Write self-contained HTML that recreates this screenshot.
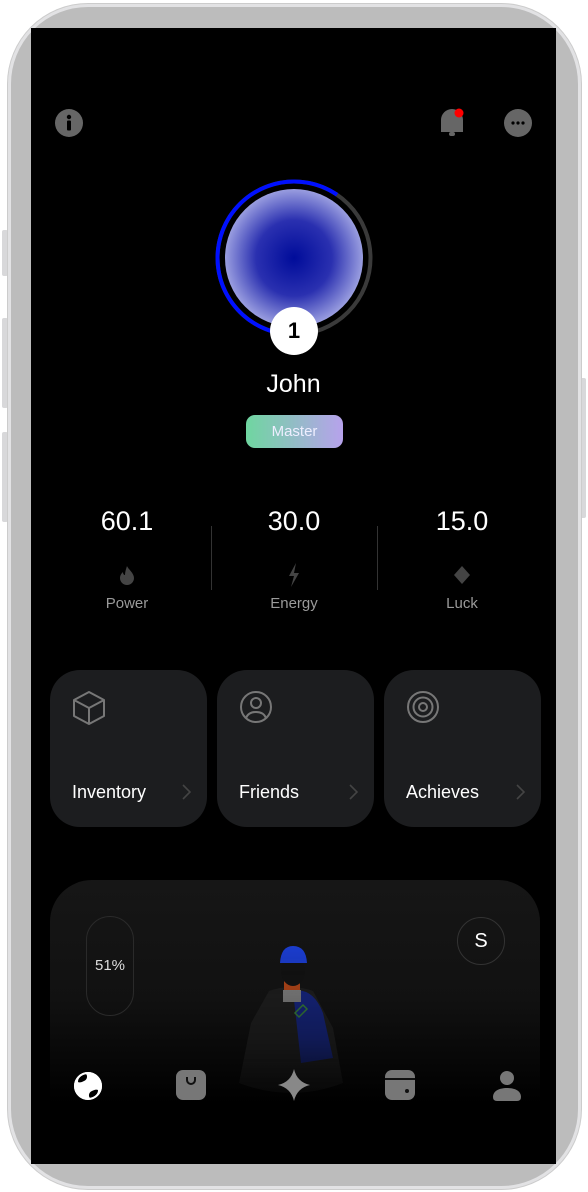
<!DOCTYPE html>
<html><head><meta charset="utf-8"><style>
*{margin:0;padding:0;box-sizing:border-box}
body{width:588px;height:1192px;background:#fff;position:relative;overflow:hidden;font-family:"Liberation Sans",sans-serif;color:#fff}
.body{position:absolute;left:8px;top:4px;width:573px;height:1185px;border-radius:80px;background:#bcbcbc;border:3px solid #e2e2e4;box-shadow:0 0 0 1px #ccc}
.btn{position:absolute;background:#d8d8da;border-radius:2px}
.screen{position:absolute;left:31px;top:28px;width:525px;height:1136px;background:#000;overflow:hidden}
.abs{position:absolute}
.stat{position:absolute;width:150px;text-align:center}
.stat .v{font-size:27px;}
.stat .l{font-size:15px;color:#9a9a9a;position:absolute;top:89px;width:100%}
.card{position:absolute;top:642px;width:157px;height:157px;border-radius:30px;background:#1c1d1f}
.card .t{position:absolute;left:22px;top:112px;font-size:18px}
.card .ch{position:absolute;right:16px;top:113px}
.card .ic{position:absolute;left:22px;top:20px}
</style></head><body>
<div class="btn" style="left:2px;top:230px;width:6px;height:46px"></div>
<div class="btn" style="left:2px;top:318px;width:6px;height:90px"></div>
<div class="btn" style="left:2px;top:432px;width:6px;height:90px"></div>
<div class="btn" style="left:580px;top:378px;width:6px;height:140px"></div>
<div class="body"></div>
<div class="screen">
 <svg class="abs" style="left:23px;top:80px" width="30" height="30" viewBox="0 0 30 30"><circle cx="15" cy="15" r="14" fill="#666"/><circle cx="15" cy="9" r="2.2" fill="#000"/><rect x="13" y="12.5" width="4" height="10" rx="1" fill="#000"/></svg>
 <svg class="abs" style="left:406px;top:78px" width="30" height="34" viewBox="0 0 30 34"><path d="M4 26V14a11 11 0 0 1 22 0v12z" fill="#666"/><rect x="12" y="26" width="6" height="4" rx="2" fill="#666"/><circle cx="22" cy="7" r="4.5" fill="#f00"/></svg>
 <svg class="abs" style="left:472px;top:80px" width="30" height="30" viewBox="0 0 30 30"><circle cx="15" cy="15" r="14" fill="#666"/><circle cx="10" cy="15" r="1.6" fill="#000"/><circle cx="15" cy="15" r="1.6" fill="#000"/><circle cx="20" cy="15" r="1.6" fill="#000"/></svg>
 <svg class="abs" style="left:183px;top:150px" width="160" height="160" viewBox="0 0 160 160">
  <defs><radialGradient id="g" cx="50%" cy="50%" r="50%"><stop offset="0" stop-color="#000c9a"/><stop offset="0.55" stop-color="#2a30b0"/><stop offset="1" stop-color="#9a9ee0"/></radialGradient></defs>
  <circle cx="80" cy="80" r="76.5" fill="none" stroke="#3a3a3a" stroke-width="4"/>
  <path d="M80 156.5A76.5 76.5 0 1 1 123 16.7" fill="none" stroke="#0010ff" stroke-width="4"/>
  <circle cx="80" cy="80" r="69" fill="url(#g)"/>
 </svg>
 <div class="abs" style="left:239px;top:279px;width:48px;height:48px;border-radius:50%;background:#fff;color:#000;font-size:22px;font-weight:bold;text-align:center;line-height:48px">1</div>
 <div class="abs" style="left:0;width:525px;top:342px;text-align:center;font-size:25px">John</div>
 <div class="abs" style="left:215px;top:387px;width:97px;height:33px;border-radius:9px;background:linear-gradient(90deg,#6fd6a0,#b7a2ec);text-align:center;line-height:33px;font-size:15px;color:#eef">Master</div>
 <div class="stat" style="left:21px;top:478px"><div class="v">60.1</div>
  <svg class="abs" style="left:65px;top:59px" width="20" height="20" viewBox="0 0 20 20"><path d="M10 1c1 3 7 7 7 12a7 7 0 0 1-14 0c0-3 2-5 3-6 0 2 1 3 2 3 0-3 1-6 2-9z" fill="#444"/></svg>
  <div class="l">Power</div></div>
 <div class="stat" style="left:188px;top:478px"><div class="v">30.0</div>
  <svg class="abs" style="left:66px;top:57px" width="18" height="24" viewBox="0 0 18 24"><path d="M11 0L4 13h5l-3 11 8-14H9z" fill="#444"/></svg>
  <div class="l">Energy</div></div>
 <div class="stat" style="left:356px;top:478px"><div class="v">15.0</div>
  <svg class="abs" style="left:65px;top:59px" width="20" height="20" viewBox="0 0 20 20"><path d="M10 1l8 9-8 9-8-9z" fill="#444"/></svg>
  <div class="l">Luck</div></div>
 <div class="abs" style="left:180px;top:498px;width:1px;height:64px;background:#333"></div>
 <div class="abs" style="left:346px;top:498px;width:1px;height:64px;background:#333"></div>
 <div class="card" style="left:19px"><svg class="ic" width="34" height="36" viewBox="0 0 34 36"><path d="M17 2L32 10V26L17 34L2 26V10Z M2 10L17 18L32 10 M17 18V34" fill="none" stroke="#777" stroke-width="2" stroke-linejoin="round"/></svg><div class="t">Inventory</div><svg class="ch" width="10" height="18" viewBox="0 0 10 18"><path d="M2 2l7 7-7 7" fill="none" stroke="#444" stroke-width="1.6"/></svg></div>
 <div class="card" style="left:186px"><svg class="ic" width="34" height="34" viewBox="0 0 34 34"><circle cx="17" cy="17" r="15" fill="none" stroke="#777" stroke-width="2"/><circle cx="17" cy="13" r="5" fill="none" stroke="#777" stroke-width="2"/><path d="M7 28c2-5 6-6 10-6s8 1 10 6" fill="none" stroke="#777" stroke-width="2"/></svg><div class="t">Friends</div><svg class="ch" width="10" height="18" viewBox="0 0 10 18"><path d="M2 2l7 7-7 7" fill="none" stroke="#444" stroke-width="1.6"/></svg></div>
 <div class="card" style="left:353px"><svg class="ic" width="34" height="34" viewBox="0 0 34 34"><circle cx="17" cy="17" r="15" fill="none" stroke="#777" stroke-width="2"/><circle cx="17" cy="17" r="9.5" fill="none" stroke="#777" stroke-width="2"/><circle cx="17" cy="17" r="4" fill="none" stroke="#777" stroke-width="2"/></svg><div class="t">Achieves</div><svg class="ch" width="10" height="18" viewBox="0 0 10 18"><path d="M2 2l7 7-7 7" fill="none" stroke="#444" stroke-width="1.6"/></svg></div>
 <div class="abs" style="left:19px;top:852px;width:490px;height:300px;border-radius:42px;background:linear-gradient(180deg,#161616 0%,#111 40%,#000 75%)"></div>
 <div class="abs" style="left:55px;top:888px;width:48px;height:100px;border-radius:24px;border:1px solid #2a2a2a;text-align:center;line-height:98px;font-size:15px;color:#ddd">51%</div>
 <div class="abs" style="left:426px;top:889px;width:48px;height:48px;border-radius:50%;border:1px solid #333;text-align:center;line-height:46px;font-size:20px">S</div>
 <svg class="abs" style="left:190px;top:905px" width="140" height="190" viewBox="0 0 140 190">
  <defs><linearGradient id="fd" x1="0" y1="0" x2="0" y2="1"><stop offset="0" stop-color="#fff" stop-opacity="1"/><stop offset="0.55" stop-color="#fff" stop-opacity="0.6"/><stop offset="1" stop-color="#fff" stop-opacity="0"/></linearGradient><mask id="m"><rect width="140" height="190" fill="url(#fd)"/></mask></defs>
  <g mask="url(#m)">
  <path d="M30 90 L48 58 Q70 50 92 58 L112 95 L122 150 Q70 170 18 150Z" fill="#1e1e1e"/>
  <path d="M72 58 Q92 54 102 80 L112 125 L80 130Z" fill="#14258a"/>
  <rect x="63" y="48" width="16" height="12" fill="#c24a18"/>
  <rect x="62" y="57" width="18" height="12" fill="#8a8a8a"/>
  <ellipse cx="72" cy="38" rx="12" ry="15" fill="#111"/>
  <path d="M59 30 Q60 13 72 13 Q85 13 86 30Z" fill="#1b3ed6"/>
  <path d="M74 80 l8 -8 l4 4 l-8 8z" fill="none" stroke="#3a8a3a" stroke-width="1.5"/>
  </g>
 </svg>
 <svg class="abs" style="left:41px;top:1042px" width="32" height="32" viewBox="0 0 32 32"><circle cx="16" cy="16" r="14" fill="#fff"/><path d="M6 12a10 8 0 0 1 8-8c2 2 1 6-2 7-2 1-4 2-6 1zM26 20a10 8 0 0 1-8 8c-2-2-1-6 2-7 2-1 4-2 6-1z" fill="#000"/><circle cx="16" cy="16" r="13" fill="none" stroke="#fff" stroke-width="2"/></svg>
 <svg class="abs" style="left:144px;top:1041px" width="32" height="32" viewBox="0 0 32 32"><rect x="1" y="1" width="30" height="30" rx="7" fill="#777"/><path d="M12 8v3a4 4 0 0 0 8 0V8" fill="none" stroke="#111" stroke-width="2"/></svg>
 <svg class="abs" style="left:246px;top:1040px" width="34" height="34" viewBox="0 0 34 34"><path d="M17 1Q20 14 33 17Q20 20 17 33Q14 20 1 17Q14 14 17 1Z" fill="#888"/></svg>
 <svg class="abs" style="left:353px;top:1041px" width="32" height="32" viewBox="0 0 32 32"><rect x="1" y="1" width="30" height="30" rx="7" fill="#777"/><rect x="1" y="9" width="30" height="2" fill="#111"/><circle cx="23" cy="22" r="2" fill="#111"/></svg>
 <svg class="abs" style="left:461px;top:1041px" width="30" height="32" viewBox="0 0 30 32"><circle cx="15" cy="9" r="7" fill="#777"/><path d="M1 28c0-6 6-9 14-9s14 3 14 9q0 4-4 4H5q-4 0-4-4z" fill="#777"/></svg>
</div>
</body></html>
